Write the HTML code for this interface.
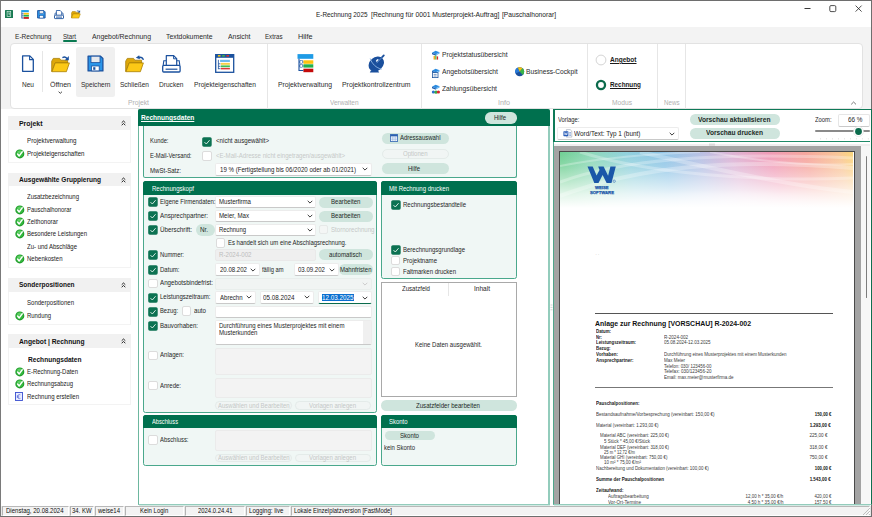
<!DOCTYPE html><html lang="de"><head><meta charset="utf-8"><title>E-Rechnung 2025</title><style>

html,body{margin:0;padding:0}
body{width:872px;height:517px;position:relative;overflow:hidden;background:#fff;font-family:"Liberation Sans",sans-serif;}
body div,body svg,body span{position:absolute;box-sizing:border-box}
span{white-space:pre;line-height:12px;height:12px}

</style></head><body>
<div style="left:0px;top:0px;width:872px;height:517px;background:#fff;border:1px solid #6e6e6e;border-left-color:#7a7a7a"></div>
<div style="left:1px;top:27px;width:870px;height:82px;background:#f3f3f3"></div>
<div style="left:10px;top:43px;width:853px;height:66px;background:#fff;border:1px solid #e2e2e2;border-radius:4px"></div>
<span style="left:316px;top:8.80px;font-size:7.5px;color:#1a1a1a;transform:scaleX(0.8517);transform-origin:0 50%;">E-Rechnung 2025</span>
<span style="left:371.2px;top:8.80px;font-size:7.5px;color:#1a1a1a;transform:scaleX(0.9024);transform-origin:0 50%;">[Rechnung für 0001 Musterprojekt-Auftrag]</span>
<span style="left:502px;top:8.80px;font-size:7.5px;color:#1a1a1a;transform:scaleX(0.8871);transform-origin:0 50%;">[Pauschalhonorar]</span>
<svg style="left:800px;top:2px" width="66" height="14" viewBox="0 0 66 14"><path d="M4.5 6.5h6" stroke="#222" stroke-width="0.9" fill="none"/><rect x="29.8" y="3.6" width="6" height="6" rx="1.2" stroke="#222" stroke-width="0.8" fill="none"/><path d="M55.6 3.6l6 6M61.6 3.6l-6 6" stroke="#222" stroke-width="0.8" fill="none"/></svg>
<svg style="left:5px;top:10px" width="9" height="9" viewBox="0 0 9 9"><rect x="0" y="0" width="8" height="8" rx="0.5" fill="#197a52"/><rect x="2.1" y="1.3" width="3.6" height="5.2" fill="none" stroke="#cfeadd" stroke-width="0.7"/><path d="M3.2 2.8h1.3v1.1h-1.3M4 3.9l0.8 1.5" stroke="#cfeadd" stroke-width="0.55" fill="none"/></svg>
<svg style="left:21px;top:9.6px" width="9" height="10" viewBox="0 0 9 10"><rect x="0.2" y="0.1" width="7.6" height="2.1" fill="#1e9be6"/><rect x="2.6" y="2.9" width="5.3" height="1.7" fill="#ffc20e"/><rect x="2.6" y="4.9" width="5.3" height="1.7" fill="#22b14c"/><rect x="2.6" y="7.1" width="5.3" height="1.7" fill="#c40a0a"/><path d="M0.8 2.2v6.2M0.8 3.8h1.8M0.8 5.8h1.8M0.8 8h1.8" stroke="#1b519e" stroke-width="0.8" fill="none"/></svg>
<svg style="left:37.2px;top:9.8px" width="9" height="9" viewBox="0 0 9 9"><path d="M0.6 0.6h6.2l1.3 1.3v6.1h-7.5z" fill="#2b95e8" stroke="#1b519e" stroke-width="0.9" stroke-linejoin="round"/><rect x="2.3" y="0.7" width="4.2" height="3" fill="#e6e9ee" stroke="#1b519e" stroke-width="0.5"/><rect x="2.6" y="5.6" width="3.6" height="2.4" fill="#fff" stroke="#1b519e" stroke-width="0.5"/></svg>
<svg style="left:53.5px;top:9.6px" width="10" height="10" viewBox="0 0 10 10"><path d="M2.4 5V0.5h3.8l1.5 1.5V5" fill="#fff" stroke="#1b519e" stroke-width="0.8" stroke-linejoin="round"/><path d="M2.4 3H1.2L0.8 5.2M7.7 3h1.2l0.4 2.2" fill="none" stroke="#1b519e" stroke-width="0.7"/><rect x="0.5" y="5.2" width="9" height="3.4" rx="0.6" fill="#fff" stroke="#1b519e" stroke-width="0.9"/><path d="M2 7.1h6" stroke="#1b519e" stroke-width="0.9"/></svg>
<svg style="left:70.8px;top:9.6px" width="10" height="9" viewBox="0 0 10 9"><path d="M0.5 8V2.9L1.3 1.5H4.4L5 2.4H8.3V4H2.2z" fill="#dda70a" stroke="#a87f08" stroke-width="0.5" stroke-linejoin="round"/><path d="M0.6 8.1L2.2 3.9H9.3L7.8 8.1z" fill="#fcc916" stroke="#a87f08" stroke-width="0.5" stroke-linejoin="round"/><path d="M5.8 1.2c1-0.6 2-0.3 2.5 0.7" stroke="#1b519e" stroke-width="0.8" fill="none"/><path d="M9.1 0.2v2.4h-2.3z" fill="#1b519e"/></svg>
<span style="left:14.5px;top:31.10px;font-size:7.5px;color:#2b2b2b;transform:scaleX(0.8752);transform-origin:0 50%;">E-Rechnung</span>
<span style="left:63px;top:31.10px;font-size:7.5px;color:#2b2b2b;transform:scaleX(0.8205);transform-origin:0 50%;">Start</span>
<span style="left:91.5px;top:31.10px;font-size:7.5px;color:#2b2b2b;transform:scaleX(0.9187);transform-origin:0 50%;">Angebot/Rechnung</span>
<span style="left:166px;top:31.10px;font-size:7.5px;color:#2b2b2b;transform:scaleX(0.9140);transform-origin:0 50%;">Textdokumente</span>
<span style="left:227.5px;top:31.10px;font-size:7.5px;color:#2b2b2b;transform:scaleX(0.9143);transform-origin:0 50%;">Ansicht</span>
<span style="left:265px;top:31.10px;font-size:7.5px;color:#2b2b2b;transform:scaleX(0.8229);transform-origin:0 50%;">Extras</span>
<span style="left:297.5px;top:31.10px;font-size:7.5px;color:#2b2b2b;transform:scaleX(0.9657);transform-origin:0 50%;">Hilfe</span>
<div style="left:62.8px;top:40.4px;width:14px;height:1.5px;background:#0a7a52;border-radius:1px"></div>
<div style="left:266.5px;top:44px;width:1px;height:64.5px;background:#e6e6e6"></div>
<div style="left:421.0px;top:44px;width:1px;height:64.5px;background:#e6e6e6"></div>
<div style="left:586.5px;top:44px;width:1px;height:64.5px;background:#e6e6e6"></div>
<div style="left:656.5px;top:44px;width:1px;height:64.5px;background:#e6e6e6"></div>
<div style="left:685.0px;top:44px;width:1px;height:64.5px;background:#e6e6e6"></div>
<div style="left:42px;top:51px;width:1px;height:41px;background:#e6e6e6"></div>
<div style="left:76px;top:47px;width:39px;height:50px;background:#f0f0f0;border-radius:2.5px"></div>
<span style="left:22px;top:79.20px;font-size:7.5px;color:#2b2b2b;transform:scaleX(0.8717);transform-origin:0 50%;">Neu</span>
<span style="left:50px;top:79.20px;font-size:7.5px;color:#2b2b2b;transform:scaleX(0.9379);transform-origin:0 50%;">Öffnen</span>
<span style="left:80.5px;top:79.20px;font-size:7.5px;color:#2b2b2b;transform:scaleX(0.8733);transform-origin:0 50%;">Speichern</span>
<span style="left:120px;top:79.20px;font-size:7.5px;color:#2b2b2b;transform:scaleX(0.8693);transform-origin:0 50%;">Schließen</span>
<span style="left:159px;top:79.20px;font-size:7.5px;color:#2b2b2b;transform:scaleX(0.8770);transform-origin:0 50%;">Drucken</span>
<span style="left:194px;top:79.20px;font-size:7.5px;color:#2b2b2b;transform:scaleX(0.8851);transform-origin:0 50%;">Projekteigenschaften</span>
<span style="left:278px;top:79.20px;font-size:7.5px;color:#2b2b2b;transform:scaleX(0.9057);transform-origin:0 50%;">Projektverwaltung</span>
<span style="left:342px;top:79.20px;font-size:7.5px;color:#2b2b2b;transform:scaleX(0.9179);transform-origin:0 50%;">Projektkontrollzentrum</span>
<svg style="left:57.7px;top:90.6px" width="5" height="4" viewBox="0 0 5 4"><path d="M0.6 0.7l1.7 1.6 1.7-1.6" stroke="#333" stroke-width="0.9" fill="none"/></svg>
<span style="left:128px;top:96.90px;font-size:7.5px;color:#b0b0b0;transform:scaleX(0.8996);transform-origin:0 50%;">Projekt</span>
<span style="left:329.5px;top:96.90px;font-size:7.5px;color:#b0b0b0;transform:scaleX(0.8653);transform-origin:0 50%;">Verwalten</span>
<span style="left:498px;top:96.90px;font-size:7.5px;color:#b0b0b0;transform:scaleX(0.9588);transform-origin:0 50%;">Info</span>
<span style="left:612px;top:96.90px;font-size:7.5px;color:#b0b0b0;transform:scaleX(0.8883);transform-origin:0 50%;">Modus</span>
<span style="left:663.5px;top:96.90px;font-size:7.5px;color:#b0b0b0;transform:scaleX(0.8260);transform-origin:0 50%;">News</span>
<svg style="left:850px;top:100px" width="8" height="6" viewBox="0 0 8 6"><path d="M1.2 4.4l2.4-2.4 2.4 2.4" stroke="#555" stroke-width="0.8" fill="none"/></svg>
<svg style="left:21px;top:55px" width="14" height="18" viewBox="0 0 14 18"><path d="M1.6 0.9h7.2l3.5 3.5v11.9h-10.7z" fill="#fff" stroke="#1b519e" stroke-width="1.3" stroke-linejoin="round"/><path d="M8.6 1v3.6h3.6" fill="none" stroke="#1b519e" stroke-width="1.1"/></svg>
<svg style="left:50.5px;top:54.5px" width="20" height="18" viewBox="0 0 20 18"><path d="M0.7 16.6V6.2L2.3 3.4H8.6L9.8 5.2H16.6V8H4.2z" fill="#dda70a" stroke="#a87f08" stroke-width="0.8" stroke-linejoin="round"/><path d="M1 16.7L4.2 7.9H18.4L15.4 16.7z" fill="#fcc916" stroke="#a87f08" stroke-width="0.8" stroke-linejoin="round"/><path d="M11.4 2.6c2-1 4-0.4 5 1.6" stroke="#1b519e" stroke-width="1.3" fill="none"/><path d="M17.8 1v4.2h-4z" fill="#1b519e"/></svg>
<svg style="left:124.5px;top:54.5px" width="20" height="18" viewBox="0 0 20 18"><path d="M0.7 16.6V6.2L2.3 3.4H8.6L9.8 5.2H16.6V8H4.2z" fill="#dda70a" stroke="#a87f08" stroke-width="0.8" stroke-linejoin="round"/><path d="M1 16.7L4.2 7.9H18.4L15.4 16.7z" fill="#fcc916" stroke="#a87f08" stroke-width="0.8" stroke-linejoin="round"/><path d="M18.4 4.9c-0.6-2-2.6-3-5-2.5" stroke="#1b519e" stroke-width="1.3" fill="none"/><path d="M10.8 2.8l3.4-2.6 0.7 4z" fill="#1b519e"/></svg>
<svg style="left:87px;top:55px" width="17" height="17" viewBox="0 0 17 17"><path d="M1.1 1.1h12.4l2.4 2.4v12.4h-14.8z" fill="#2b95e8" stroke="#1b519e" stroke-width="1.3" stroke-linejoin="round"/><rect x="4" y="1.2" width="9" height="6.4" fill="#e6e9ee" stroke="#1b519e" stroke-width="0.8"/><rect x="4.6" y="11" width="7.6" height="4.9" fill="#fff" stroke="#1b519e" stroke-width="0.8"/><rect x="6.2" y="12.2" width="2.2" height="2.6" fill="#1b519e"/></svg>
<svg style="left:162px;top:55px" width="19" height="18" viewBox="0 0 19 18"><path d="M4.3 10V0.7h7.4l3 3V10" fill="#fff" stroke="#1b519e" stroke-width="1.2" stroke-linejoin="round"/><path d="M11.6 0.8v3h3" fill="none" stroke="#1b519e" stroke-width="1"/><path d="M4.3 5.8H1.8L1.2 10.4M14.7 5.8h2.5l0.6 4.6" fill="none" stroke="#1b519e" stroke-width="1.1"/><rect x="0.7" y="10.4" width="17.4" height="6.6" rx="1" fill="#fff" stroke="#1b519e" stroke-width="1.3"/><path d="M3.6 14.2h11.8" stroke="#1b519e" stroke-width="1.2"/></svg>
<svg style="left:215px;top:54px" width="20" height="19" viewBox="0 0 20 19"><rect x="0.7" y="0.4" width="18" height="17.9" fill="#fff" stroke="#1b519e" stroke-width="1.3"/><rect x="0.7" y="0.4" width="18" height="3.4" fill="#1b519e"/><rect x="2.9" y="1" width="2.6" height="1.6" fill="#e8c018"/><rect x="7.2" y="1" width="2.6" height="1.6" fill="#3fae49"/><rect x="11.4" y="1" width="2.6" height="1.6" fill="#d03030"/><rect x="5.1" y="5.8" width="9.8" height="2.2" fill="#6db8f0"/><rect x="5.8" y="8.9" width="9.1" height="1.9" fill="#f6d04a"/><rect x="5.8" y="11.4" width="9.1" height="1.8" fill="#3fbf55"/><rect x="5.8" y="13.9" width="9.1" height="1.5" fill="#d83a3a"/><path d="M3.4 5.8v9.4M3.4 9.8h2M3.4 12.3h2M3.4 14.7h2" stroke="#1b519e" stroke-width="0.8" fill="none"/></svg>
<svg style="left:296.5px;top:54px" width="17" height="19" viewBox="0 0 17 19"><rect x="0.5" y="0.1" width="15.8" height="4.7" fill="#1e9be6"/><rect x="6.4" y="6.3" width="9.9" height="3.5" fill="#ffc20e"/><rect x="6.4" y="10.3" width="9.9" height="3.3" fill="#22b14c"/><rect x="6.4" y="14.7" width="9.9" height="3.5" fill="#c40a0a"/><path d="M2 4.8v12.2M2 8h4.4M2 12h4.4M2 16.5h4.4" stroke="#1b519e" stroke-width="1.1" fill="none"/><rect x="3" y="6.6" width="2.6" height="2.6" fill="#fff" stroke="#1b519e" stroke-width="0.5"/><rect x="3" y="10.6" width="2.6" height="2.6" fill="#fff" stroke="#1b519e" stroke-width="0.5"/></svg>
<svg style="left:367px;top:54px" width="19" height="19" viewBox="0 0 19 19"><path d="M4 16.2l-1.2 2.3h9.4l-1.6-2.6z" fill="#1a4f9c"/><ellipse cx="9.3" cy="10" rx="8.4" ry="6.7" fill="#1a4f9c" transform="rotate(-42 9.3 10)"/><path d="M3.2 4.4c1.6 5.4 6 9.6 11.6 10.8" stroke="#8db4e2" stroke-width="0.9" fill="none"/><path d="M9.4 9.4l7.4-8" stroke="#1a4f9c" stroke-width="1.8" stroke-linecap="round"/><path d="M9.6 9.2l5.6-6" stroke="#8db4e2" stroke-width="0.6"/><ellipse cx="10.2" cy="6.4" rx="1.6" ry="0.9" fill="#e8f0fa" transform="rotate(-42 10.2 6.4)"/></svg>
<svg style="left:430.5px;top:50px" width="10" height="10" viewBox="0 0 10 10"><path d="M1 2.8l3.6-2 4 1.4-3.7 2z" fill="#2a8be0"/><path d="M1 2.8v1.4l3.9 1.6v-1.6z" fill="#1e5fb0"/><path d="M4.9 4.2l3.7-2v1.4l-3.7 2z" fill="#63b2f2"/><rect x="2.6" y="6" width="1.3" height="3.6" fill="#f0a30a"/><rect x="4.2" y="5.4" width="1.3" height="4.2" fill="#57b947"/><rect x="5.8" y="6.4" width="1.3" height="3.2" fill="#d8262c"/></svg>
<svg style="left:430.5px;top:67.5px" width="10" height="10" viewBox="0 0 10 10"><path d="M1 2.8l3.6-2 4 1.4-3.7 2z" fill="#2a8be0"/><path d="M1 2.8v1.4l3.9 1.6v-1.6z" fill="#1e5fb0"/><path d="M4.9 4.2l3.7-2v1.4l-3.7 2z" fill="#63b2f2"/><rect x="1.4" y="4.6" width="5.6" height="5" fill="#fff" stroke="#1e57a0" stroke-width="0.8"/><path d="M2.6 6.4h3M2.6 8h3" stroke="#1e57a0" stroke-width="0.6"/></svg>
<svg style="left:430.5px;top:83.5px" width="10" height="10" viewBox="0 0 10 10"><path d="M1 2.8l3.6-2 4 1.4-3.7 2z" fill="#2a8be0"/><path d="M1 2.8v1.4l3.9 1.6v-1.6z" fill="#1e5fb0"/><path d="M4.9 4.2l3.7-2v1.4l-3.7 2z" fill="#63b2f2"/><circle cx="2.4" cy="8" r="1.6" fill="#2a6fd0"/><circle cx="5" cy="8.2" r="1.6" fill="#3aa845"/><circle cx="7.4" cy="8" r="1.6" fill="#d8262c"/></svg>
<span style="left:442px;top:48.90px;font-size:7.5px;color:#2b2b2b;transform:scaleX(0.8876);transform-origin:0 50%;">Projektstatusübersicht</span>
<span style="left:442px;top:66.40px;font-size:7.5px;color:#2b2b2b;transform:scaleX(0.9014);transform-origin:0 50%;">Angebotsübersicht</span>
<span style="left:442px;top:82.90px;font-size:7.5px;color:#2b2b2b;transform:scaleX(0.8973);transform-origin:0 50%;">Zahlungsübersicht</span>
<span style="left:526px;top:66.40px;font-size:7.5px;color:#2b2b2b;transform:scaleX(0.8886);transform-origin:0 50%;">Business-Cockpit</span>
<svg style="left:515.2px;top:67px" width="10" height="10" viewBox="0 0 10 10"><circle cx="4.7" cy="4.7" r="4.5" fill="#1a4f9c"/><path d="M4.7 4.7L0.47 6.24A4.5 4.5 0 0 1 2.80 0.62Z" fill="#2a7bd8"/><path d="M4.7 4.7L2.80 0.62A4.5 4.5 0 0 1 7.59 1.25Z" fill="#f2c20f"/><path d="M4.7 4.7L7.59 1.25A4.5 4.5 0 0 1 7.88 7.88Z" fill="#3ab54a"/></svg>
<svg style="left:595px;top:54px" width="12" height="12" viewBox="0 0 12 12"><circle cx="6" cy="6" r="4.9" fill="#fff" stroke="#c9c9c9" stroke-width="0.8"/></svg>
<svg style="left:595px;top:78.5px" width="12" height="12" viewBox="0 0 12 12"><circle cx="6" cy="6" r="4.05" fill="#fff" stroke="#0b6b4c" stroke-width="2.3"/></svg>
<span style="left:609.5px;top:53.90px;font-size:7.0px;color:#1a1a1a;font-weight:bold;text-decoration:underline;transform:scaleX(0.9334);transform-origin:0 50%;">Angebot</span>
<span style="left:609.5px;top:78.90px;font-size:7.0px;color:#1a1a1a;font-weight:bold;text-decoration:underline;transform:scaleX(0.9055);transform-origin:0 50%;">Rechnung</span>
<div style="left:7.5px;top:116px;width:123.5px;height:47px;background:#fff;border:1px solid #f3f3f3"></div>
<div style="left:7.5px;top:116px;width:123.5px;height:14px;background:#f1f1f1"></div>
<span style="left:18.5px;top:118.00px;font-size:7.0px;color:#111;font-weight:bold;transform:scaleX(0.9901);transform-origin:0 50%;">Projekt</span>
<svg style="left:121.4px;top:120.3px" width="5" height="6" viewBox="0 0 5 6"><path d="M0.7 2.7l1.8-1.7 1.8 1.7M0.7 5.2l1.8-1.7 1.8 1.7" stroke="#111" stroke-width="0.9" fill="none"/></svg>
<span style="left:27px;top:135.40px;font-size:6.8px;color:#222;transform:scaleX(0.9161);transform-origin:0 50%;">Projektverwaltung</span>
<span style="left:27px;top:147.90px;font-size:6.8px;color:#222;transform:scaleX(0.9057);transform-origin:0 50%;">Projekteigenschaften</span>
<svg style="left:14.6px;top:148.7px" width="10" height="10" viewBox="0 0 10 10"><circle cx="4.8" cy="4.9" r="4.5" fill="#1f9a2a"/><circle cx="4.8" cy="4.7" r="3.5" fill="#34b83e"/><ellipse cx="4.8" cy="2.9" rx="2.6" ry="1.5" fill="#6fd873" fill-opacity="0.7"/><path d="M2.6 5l1.6 1.9 3-4" stroke="#fff" stroke-width="1.5" fill="none" stroke-linecap="round" stroke-linejoin="round"/></svg>
<div style="left:7.5px;top:172.5px;width:123.5px;height:95.5px;background:#fff;border:1px solid #f3f3f3"></div>
<div style="left:7.5px;top:172.5px;width:123.5px;height:13.5px;background:#f1f1f1"></div>
<span style="left:18.5px;top:174.20px;font-size:7.0px;color:#111;font-weight:bold;transform:scaleX(0.9370);transform-origin:0 50%;">Ausgewählte Gruppierung</span>
<svg style="left:121.4px;top:176.5px" width="5" height="6" viewBox="0 0 5 6"><path d="M0.7 2.7l1.8-1.7 1.8 1.7M0.7 5.2l1.8-1.7 1.8 1.7" stroke="#111" stroke-width="0.9" fill="none"/></svg>
<span style="left:27px;top:191.40px;font-size:6.8px;color:#222;transform:scaleX(0.8821);transform-origin:0 50%;">Zusatzbezeichnung</span>
<span style="left:27px;top:203.90px;font-size:6.8px;color:#222;transform:scaleX(0.8659);transform-origin:0 50%;">Pauschalhonorar</span>
<svg style="left:14.6px;top:204.7px" width="10" height="10" viewBox="0 0 10 10"><circle cx="4.8" cy="4.9" r="4.5" fill="#1f9a2a"/><circle cx="4.8" cy="4.7" r="3.5" fill="#34b83e"/><ellipse cx="4.8" cy="2.9" rx="2.6" ry="1.5" fill="#6fd873" fill-opacity="0.7"/><path d="M2.6 5l1.6 1.9 3-4" stroke="#fff" stroke-width="1.5" fill="none" stroke-linecap="round" stroke-linejoin="round"/></svg>
<span style="left:27px;top:216.40px;font-size:6.8px;color:#222;transform:scaleX(0.8917);transform-origin:0 50%;">Zeithonorar</span>
<svg style="left:14.6px;top:217.2px" width="10" height="10" viewBox="0 0 10 10"><circle cx="4.8" cy="4.9" r="4.5" fill="#1f9a2a"/><circle cx="4.8" cy="4.7" r="3.5" fill="#34b83e"/><ellipse cx="4.8" cy="2.9" rx="2.6" ry="1.5" fill="#6fd873" fill-opacity="0.7"/><path d="M2.6 5l1.6 1.9 3-4" stroke="#fff" stroke-width="1.5" fill="none" stroke-linecap="round" stroke-linejoin="round"/></svg>
<span style="left:27px;top:228.40px;font-size:6.8px;color:#222;transform:scaleX(0.8819);transform-origin:0 50%;">Besondere Leistungen</span>
<svg style="left:14.6px;top:229.2px" width="10" height="10" viewBox="0 0 10 10"><circle cx="4.8" cy="4.9" r="4.5" fill="#1f9a2a"/><circle cx="4.8" cy="4.7" r="3.5" fill="#34b83e"/><ellipse cx="4.8" cy="2.9" rx="2.6" ry="1.5" fill="#6fd873" fill-opacity="0.7"/><path d="M2.6 5l1.6 1.9 3-4" stroke="#fff" stroke-width="1.5" fill="none" stroke-linecap="round" stroke-linejoin="round"/></svg>
<span style="left:27px;top:240.90px;font-size:6.8px;color:#222;transform:scaleX(0.8820);transform-origin:0 50%;">Zu- und Abschläge</span>
<span style="left:27px;top:253.40px;font-size:6.8px;color:#222;transform:scaleX(0.8861);transform-origin:0 50%;">Nebenkosten</span>
<svg style="left:14.6px;top:254.2px" width="10" height="10" viewBox="0 0 10 10"><circle cx="4.8" cy="4.9" r="4.5" fill="#1f9a2a"/><circle cx="4.8" cy="4.7" r="3.5" fill="#34b83e"/><ellipse cx="4.8" cy="2.9" rx="2.6" ry="1.5" fill="#6fd873" fill-opacity="0.7"/><path d="M2.6 5l1.6 1.9 3-4" stroke="#fff" stroke-width="1.5" fill="none" stroke-linecap="round" stroke-linejoin="round"/></svg>
<div style="left:7.5px;top:278px;width:123.5px;height:47px;background:#fff;border:1px solid #f3f3f3"></div>
<div style="left:7.5px;top:278px;width:123.5px;height:13.5px;background:#f1f1f1"></div>
<span style="left:18.5px;top:279.45px;font-size:7.0px;color:#111;font-weight:bold;transform:scaleX(0.9328);transform-origin:0 50%;">Sonderpositionen</span>
<svg style="left:121.4px;top:281.75px" width="5" height="6" viewBox="0 0 5 6"><path d="M0.7 2.7l1.8-1.7 1.8 1.7M0.7 5.2l1.8-1.7 1.8 1.7" stroke="#111" stroke-width="0.9" fill="none"/></svg>
<span style="left:27px;top:297.40px;font-size:6.8px;color:#222;transform:scaleX(0.8884);transform-origin:0 50%;">Sonderpositionen</span>
<span style="left:27px;top:309.90px;font-size:6.8px;color:#222;transform:scaleX(0.8698);transform-origin:0 50%;">Rundung</span>
<svg style="left:14.6px;top:310.7px" width="10" height="10" viewBox="0 0 10 10"><circle cx="4.8" cy="4.9" r="4.5" fill="#1f9a2a"/><circle cx="4.8" cy="4.7" r="3.5" fill="#34b83e"/><ellipse cx="4.8" cy="2.9" rx="2.6" ry="1.5" fill="#6fd873" fill-opacity="0.7"/><path d="M2.6 5l1.6 1.9 3-4" stroke="#fff" stroke-width="1.5" fill="none" stroke-linecap="round" stroke-linejoin="round"/></svg>
<div style="left:7.5px;top:334px;width:123.5px;height:71px;background:#fff;border:1px solid #f3f3f3"></div>
<div style="left:7.5px;top:334px;width:123.5px;height:13.5px;background:#f1f1f1"></div>
<span style="left:18.5px;top:335.70px;font-size:7.0px;color:#111;font-weight:bold;transform:scaleX(0.9569);transform-origin:0 50%;">Angebot | Rechnung</span>
<svg style="left:121.4px;top:338px" width="5" height="6" viewBox="0 0 5 6"><path d="M0.7 2.7l1.8-1.7 1.8 1.7M0.7 5.2l1.8-1.7 1.8 1.7" stroke="#111" stroke-width="0.9" fill="none"/></svg>
<span style="left:27px;top:365.90px;font-size:6.8px;color:#222;transform:scaleX(0.8765);transform-origin:0 50%;">E-Rechnung-Daten</span>
<svg style="left:14.6px;top:366.7px" width="10" height="10" viewBox="0 0 10 10"><circle cx="4.8" cy="4.9" r="4.5" fill="#1f9a2a"/><circle cx="4.8" cy="4.7" r="3.5" fill="#34b83e"/><ellipse cx="4.8" cy="2.9" rx="2.6" ry="1.5" fill="#6fd873" fill-opacity="0.7"/><path d="M2.6 5l1.6 1.9 3-4" stroke="#fff" stroke-width="1.5" fill="none" stroke-linecap="round" stroke-linejoin="round"/></svg>
<span style="left:27px;top:377.90px;font-size:6.8px;color:#222;transform:scaleX(0.8695);transform-origin:0 50%;">Rechnungsabzug</span>
<svg style="left:14.6px;top:378.7px" width="10" height="10" viewBox="0 0 10 10"><circle cx="4.8" cy="4.9" r="4.5" fill="#1f9a2a"/><circle cx="4.8" cy="4.7" r="3.5" fill="#34b83e"/><ellipse cx="4.8" cy="2.9" rx="2.6" ry="1.5" fill="#6fd873" fill-opacity="0.7"/><path d="M2.6 5l1.6 1.9 3-4" stroke="#fff" stroke-width="1.5" fill="none" stroke-linecap="round" stroke-linejoin="round"/></svg>
<span style="left:27px;top:391.10px;font-size:6.8px;color:#222;transform:scaleX(0.8877);transform-origin:0 50%;">Rechnung erstellen</span>
<svg style="left:15px;top:391.5px" width="8" height="9" viewBox="0 0 8 9"><rect x="0.5" y="0.5" width="7" height="8" fill="#e8ecff" stroke="#3a4fd0" stroke-width="0.9"/><path d="M5.4 2.8c-1.6-0.8-2.8 0.2-2.8 1.8s1.2 2.6 2.8 1.8M1.8 4h2.4M1.8 5.2h2.4" stroke="#3a4fd0" stroke-width="0.6" fill="none"/></svg>
<span style="left:27.5px;top:354.10px;font-size:6.8px;color:#111;font-weight:bold;transform:scaleX(0.9702);transform-origin:0 50%;">Rechnungsdaten</span>
<div style="left:138px;top:109px;width:412px;height:396px;background:#fff;border-left:1px solid #6db79f;border-right:2px solid #93ccbc;border-bottom:1px solid #93ccbc;border-radius:2px 2px 0 0"></div>
<div style="left:139px;top:505px;width:411px;height:1px;background:#d3eae3"></div>
<div style="left:138px;top:109px;width:412px;height:17px;background:#00704e;border-radius:2px 2px 0 0"></div>
<span style="left:141.2px;top:112.40px;font-size:6.8px;color:#fff;font-weight:bold;text-decoration:underline;transform:scaleX(0.9666);transform-origin:0 50%;">Rechnungsdaten</span>
<div style="left:485px;top:112px;width:32px;height:11.5px;background:#cfe5dd;border-radius:5.75px"></div>
<span style="left:494px;top:112.15px;font-size:6.8px;color:#1c2a26;transform:scaleX(0.8817);transform-origin:0 50%;">Hilfe</span>
<div style="left:143px;top:126px;width:374px;height:51.5px;background:#f0f7f5;border:1px solid #4aa88c;border-top:none;border-radius:0 0 2.5px 2.5px"></div>
<span style="left:149.5px;top:135.40px;font-size:6.8px;color:#1f1f1f;transform:scaleX(0.8586);transform-origin:0 50%;">Kunde:</span>
<svg style="left:202px;top:136.5px" width="10" height="10" viewBox="0 0 10 10"><rect x="0.2" y="0.2" width="9.5" height="9.5" rx="1.6" fill="#0c7252"/><path d="M2.5 5.1l1.8 1.9 3.3-3.8" stroke="#e8f4ef" stroke-width="0.9" fill="none"/></svg>
<span style="left:216px;top:135.40px;font-size:6.8px;color:#1f1f1f;transform:scaleX(0.9048);transform-origin:0 50%;">&lt;nicht ausgewählt&gt;</span>
<span style="left:149.5px;top:150.40px;font-size:6.8px;color:#1f1f1f;transform:scaleX(0.8582);transform-origin:0 50%;">E-Mail-Versand:</span>
<div style="left:202px;top:151px;width:9.8px;height:9.8px;background:#fff;border:1px solid #dcdcdc;border-radius:2px"></div>
<span style="left:216px;top:150.40px;font-size:6.8px;color:#c6c9c8;transform:scaleX(0.8914);transform-origin:0 50%;">&lt;E-Mail-Adresse nicht eingetragen/ausgewählt&gt;</span>
<span style="left:149.5px;top:164.90px;font-size:6.8px;color:#1f1f1f;transform:scaleX(0.8921);transform-origin:0 50%;">MwSt-Satz:</span>
<div style="left:215.4px;top:163px;width:156.6px;height:12.5px;background:#fff;border:1px solid #ececec;border-bottom:1px solid #c9c9c9;border-radius:2px"></div>
<span style="left:220px;top:163.65px;font-size:6.8px;color:#1c1c1c;transform:scaleX(0.8997);transform-origin:0 50%;">19 % (Fertigstellung bis 06/2020 oder ab 01/2021)</span>
<svg style="left:362px;top:167.25px" width="6" height="4.4" viewBox="0 0 6 4.4"><path d="M0.7 0.8l2.3 2.3 2.3-2.3" stroke="#333" stroke-width="0.95" fill="none"/></svg>
<div style="left:381.5px;top:132.5px;width:67.5px;height:11px;background:#cfe5dd;border-radius:5.5px"></div>
<span style="left:400px;top:132.40px;font-size:6.8px;color:#1c2a26;transform:scaleX(0.8786);transform-origin:0 50%;">Adressauswahl</span>
<svg style="left:390px;top:134px" width="8" height="8" viewBox="0 0 8 8"><rect x="0.4" y="0.6" width="7.2" height="6.8" fill="#fff" stroke="#2a5fb0" stroke-width="0.8"/><rect x="0.4" y="0.6" width="7.2" height="1.8" fill="#2a5fb0"/><path d="M2.8 2.4v5M5.2 2.4v5M0.4 4h7.2M0.4 5.7h7.2" stroke="#7aa0d8" stroke-width="0.5"/></svg>
<div style="left:381.5px;top:148.5px;width:67.5px;height:10.5px;background:#f1f5f4;border:1px solid #e4ebe9;border-radius:5.25px"></div>
<span style="left:402.5px;top:148.15px;font-size:6.8px;color:#c4c8c7;transform:scaleX(0.8879);transform-origin:0 50%;">Optionen</span>
<div style="left:381.5px;top:163px;width:67.5px;height:11px;background:#cfe5dd;border-radius:5.5px"></div>
<span style="left:408px;top:162.90px;font-size:6.8px;color:#1c2a26;transform:scaleX(0.8817);transform-origin:0 50%;">Hilfe</span>
<div style="left:143px;top:181px;width:234px;height:232px;background:#f0f7f5;border:1px solid #4aa88c;border-radius:2.5px"></div>
<div style="left:143px;top:181px;width:234px;height:14px;background:#00704e;border-radius:2.5px 2.5px 0 0"></div>
<span style="left:151.5px;top:182.80px;font-size:6.8px;color:#fff;transform:scaleX(0.8892);transform-origin:0 50%;">Rechnungskopf</span>
<svg style="left:148px;top:197px" width="10" height="10" viewBox="0 0 10 10"><rect x="0.2" y="0.2" width="9.5" height="9.5" rx="1.6" fill="#0c7252"/><path d="M2.5 5.1l1.8 1.9 3.3-3.8" stroke="#e8f4ef" stroke-width="0.9" fill="none"/></svg>
<span style="left:160px;top:196.40px;font-size:6.8px;color:#1f1f1f;transform:scaleX(0.8794);transform-origin:0 50%;z-index:3;">Eigene Firmendaten:</span>
<div style="left:215.4px;top:196px;width:101.1px;height:12px;background:#fff;border:1px solid #ececec;border-bottom:1px solid #c9c9c9;border-radius:2px"></div>
<span style="left:219px;top:196.40px;font-size:6.8px;color:#1c1c1c;transform:scaleX(0.8916);transform-origin:0 50%;">Musterfirma</span>
<svg style="left:306.5px;top:200.0px" width="6" height="4.4" viewBox="0 0 6 4.4"><path d="M0.7 0.8l2.3 2.3 2.3-2.3" stroke="#333" stroke-width="0.95" fill="none"/></svg>
<div style="left:319px;top:196.5px;width:54px;height:11px;background:#cfe5dd;border-radius:5.5px"></div>
<span style="left:330.5px;top:196.40px;font-size:6.8px;color:#1c2a26;transform:scaleX(0.8969);transform-origin:0 50%;">Bearbeiten</span>
<svg style="left:148px;top:211px" width="10" height="10" viewBox="0 0 10 10"><rect x="0.2" y="0.2" width="9.5" height="9.5" rx="1.6" fill="#0c7252"/><path d="M2.5 5.1l1.8 1.9 3.3-3.8" stroke="#e8f4ef" stroke-width="0.9" fill="none"/></svg>
<span style="left:160px;top:210.40px;font-size:6.8px;color:#1f1f1f;transform:scaleX(0.9206);transform-origin:0 50%;">Ansprechpartner:</span>
<div style="left:215.4px;top:210px;width:101.1px;height:12px;background:#fff;border:1px solid #ececec;border-bottom:1px solid #c9c9c9;border-radius:2px"></div>
<span style="left:219px;top:210.40px;font-size:6.8px;color:#1c1c1c;transform:scaleX(0.9023);transform-origin:0 50%;">Meier, Max</span>
<svg style="left:306.5px;top:214.0px" width="6" height="4.4" viewBox="0 0 6 4.4"><path d="M0.7 0.8l2.3 2.3 2.3-2.3" stroke="#333" stroke-width="0.95" fill="none"/></svg>
<div style="left:319px;top:210.5px;width:54px;height:11px;background:#cfe5dd;border-radius:5.5px"></div>
<span style="left:330.5px;top:210.40px;font-size:6.8px;color:#1c2a26;transform:scaleX(0.8969);transform-origin:0 50%;">Bearbeiten</span>
<svg style="left:148px;top:225px" width="10" height="10" viewBox="0 0 10 10"><rect x="0.2" y="0.2" width="9.5" height="9.5" rx="1.6" fill="#0c7252"/><path d="M2.5 5.1l1.8 1.9 3.3-3.8" stroke="#e8f4ef" stroke-width="0.9" fill="none"/></svg>
<span style="left:160px;top:224.40px;font-size:6.8px;color:#1f1f1f;transform:scaleX(0.9209);transform-origin:0 50%;">Überschrift:</span>
<div style="left:195.5px;top:223.5px;width:19px;height:12.5px;background:#cfe5dd;border-radius:6.25px"></div>
<span style="left:200px;top:224.15px;font-size:6.8px;color:#1c2a26;transform:scaleX(0.9209);transform-origin:0 50%;">Nr.</span>
<div style="left:215.4px;top:224px;width:101.1px;height:12px;background:#fff;border:1px solid #ececec;border-bottom:1px solid #c9c9c9;border-radius:2px"></div>
<span style="left:219px;top:224.40px;font-size:6.8px;color:#1c1c1c;transform:scaleX(0.8710);transform-origin:0 50%;">Rechnung</span>
<svg style="left:306.5px;top:228.0px" width="6" height="4.4" viewBox="0 0 6 4.4"><path d="M0.7 0.8l2.3 2.3 2.3-2.3" stroke="#333" stroke-width="0.95" fill="none"/></svg>
<div style="left:319px;top:225px;width:9.2px;height:9.2px;background:#f4f6f5;border:1px solid #e6e9e8;border-radius:2px"></div>
<span style="left:330.5px;top:224.40px;font-size:6.8px;color:#c6c9c8;transform:scaleX(0.8992);transform-origin:0 50%;">Stornorechnung</span>
<div style="left:215.5px;top:238px;width:9.8px;height:9.8px;background:#fff;border:1px solid #dcdcdc;border-radius:2px"></div>
<span style="left:227.5px;top:237.40px;font-size:6.8px;color:#1f1f1f;transform:scaleX(0.8760);transform-origin:0 50%;">Es handelt sich um eine Abschlagsrechnung.</span>
<svg style="left:148px;top:250px" width="10" height="10" viewBox="0 0 10 10"><rect x="0.2" y="0.2" width="9.5" height="9.5" rx="1.6" fill="#0c7252"/><path d="M2.5 5.1l1.8 1.9 3.3-3.8" stroke="#e8f4ef" stroke-width="0.9" fill="none"/></svg>
<span style="left:160px;top:249.40px;font-size:6.8px;color:#1f1f1f;transform:scaleX(0.8586);transform-origin:0 50%;">Nummer:</span>
<div style="left:215.4px;top:249px;width:101.1px;height:12px;background:#efefef;border:1px solid #e9e9e9;border-radius:2px"></div>
<span style="left:219px;top:249.40px;font-size:6.8px;color:#bdbdbd;transform:scaleX(0.9051);transform-origin:0 50%;">R-2024-002</span>
<div style="left:319px;top:248.5px;width:54px;height:11.5px;background:#cfe5dd;border-radius:5.75px"></div>
<span style="left:329px;top:248.65px;font-size:6.8px;color:#1c2a26;transform:scaleX(0.9003);transform-origin:0 50%;">automatisch</span>
<svg style="left:148px;top:265px" width="10" height="10" viewBox="0 0 10 10"><rect x="0.2" y="0.2" width="9.5" height="9.5" rx="1.6" fill="#0c7252"/><path d="M2.5 5.1l1.8 1.9 3.3-3.8" stroke="#e8f4ef" stroke-width="0.9" fill="none"/></svg>
<span style="left:160px;top:263.90px;font-size:6.8px;color:#1f1f1f;transform:scaleX(0.8895);transform-origin:0 50%;">Datum:</span>
<div style="left:215.4px;top:263px;width:44.6px;height:13px;background:#fff;border:1px solid #ececec;border-bottom:1px solid #c9c9c9;border-radius:2px"></div>
<span style="left:219.5px;top:263.90px;font-size:6.8px;color:#1c1c1c;transform:scaleX(0.8926);transform-origin:0 50%;">20.08.202</span>
<svg style="left:250px;top:267.5px" width="6" height="4.4" viewBox="0 0 6 4.4"><path d="M0.7 0.8l2.3 2.3 2.3-2.3" stroke="#333" stroke-width="0.95" fill="none"/></svg>
<span style="left:262px;top:263.90px;font-size:6.8px;color:#1f1f1f;transform:scaleX(0.8494);transform-origin:0 50%;">fällig am</span>
<div style="left:294px;top:263px;width:44.5px;height:13px;background:#fff;border:1px solid #ececec;border-bottom:1px solid #c9c9c9;border-radius:2px"></div>
<span style="left:298px;top:263.90px;font-size:6.8px;color:#1c1c1c;transform:scaleX(0.8926);transform-origin:0 50%;">03.09.202</span>
<svg style="left:328.5px;top:267.5px" width="6" height="4.4" viewBox="0 0 6 4.4"><path d="M0.7 0.8l2.3 2.3 2.3-2.3" stroke="#333" stroke-width="0.95" fill="none"/></svg>
<div style="left:338.5px;top:263.5px;width:34.5px;height:11.5px;background:#cfe5dd;border-radius:5.75px"></div>
<span style="left:339.5px;top:263.65px;font-size:6.8px;color:#1c2a26;transform:scaleX(0.8869);transform-origin:0 50%;">Mahnfristen</span>
<div style="left:148px;top:278.5px;width:9.8px;height:9.8px;background:#fff;border:1px solid #dcdcdc;border-radius:2px"></div>
<span style="left:160px;top:277.40px;font-size:6.8px;color:#1f1f1f;transform:scaleX(0.9106);transform-origin:0 50%;">Angebotsbindefrist:</span>
<div style="left:215.4px;top:278px;width:156.6px;height:11.5px;background:#f1f4f3;border:1px solid #e9eeec;border-radius:2px"></div>
<svg style="left:362px;top:281.5px" width="6" height="4.4" viewBox="0 0 6 4.4"><path d="M0.7 0.8l2.3 2.3 2.3-2.3" stroke="#c9c9c9" stroke-width="0.95" fill="none"/></svg>
<svg style="left:148px;top:292.5px" width="10" height="10" viewBox="0 0 10 10"><rect x="0.2" y="0.2" width="9.5" height="9.5" rx="1.6" fill="#0c7252"/><path d="M2.5 5.1l1.8 1.9 3.3-3.8" stroke="#e8f4ef" stroke-width="0.9" fill="none"/></svg>
<span style="left:160px;top:291.40px;font-size:6.8px;color:#1f1f1f;transform:scaleX(0.8852);transform-origin:0 50%;">Leistungszeitraum:</span>
<div style="left:215.4px;top:291px;width:40.6px;height:12.5px;background:#fff;border:1px solid #ececec;border-bottom:1px solid #c9c9c9;border-radius:2px"></div>
<span style="left:219.5px;top:291.65px;font-size:6.8px;color:#1c1c1c;transform:scaleX(0.8883);transform-origin:0 50%;">Abrechn</span>
<svg style="left:246px;top:295.25px" width="6" height="4.4" viewBox="0 0 6 4.4"><path d="M0.7 0.8l2.3 2.3 2.3-2.3" stroke="#333" stroke-width="0.95" fill="none"/></svg>
<div style="left:259.5px;top:291px;width:54px;height:12.5px;background:#fff;border:1px solid #ececec;border-bottom:1px solid #c9c9c9;border-radius:2px"></div>
<span style="left:263px;top:291.65px;font-size:6.8px;color:#1c1c1c;transform:scaleX(0.9256);transform-origin:0 50%;">05.08.2024</span>
<svg style="left:303.5px;top:295.25px" width="6" height="4.4" viewBox="0 0 6 4.4"><path d="M0.7 0.8l2.3 2.3 2.3-2.3" stroke="#333" stroke-width="0.95" fill="none"/></svg>
<div style="left:317.5px;top:291px;width:54.5px;height:13px;background:#fff;border:1px solid #ececec;border-bottom:1px solid #0b6b4c;border-radius:2px"></div>
<svg style="left:362px;top:295.5px" width="6" height="4.4" viewBox="0 0 6 4.4"><path d="M0.7 0.8l2.3 2.3 2.3-2.3" stroke="#333" stroke-width="0.95" fill="none"/></svg>
<div style="left:322px;top:293.5px;width:32px;height:7.6px;background:#0a6fd0"></div>
<span style="left:322.3px;top:291.60px;font-size:6.8px;color:#fff;transform:scaleX(0.9256);transform-origin:0 50%;">12.03.2025</span>
<svg style="left:148px;top:306.5px" width="10" height="10" viewBox="0 0 10 10"><rect x="0.2" y="0.2" width="9.5" height="9.5" rx="1.6" fill="#0c7252"/><path d="M2.5 5.1l1.8 1.9 3.3-3.8" stroke="#e8f4ef" stroke-width="0.9" fill="none"/></svg>
<span style="left:160px;top:305.40px;font-size:6.8px;color:#1f1f1f;transform:scaleX(0.8502);transform-origin:0 50%;">Bezug:</span>
<div style="left:181.5px;top:306px;width:9.8px;height:9.8px;background:#fff;border:1px solid #dcdcdc;border-radius:2px"></div>
<span style="left:194px;top:305.40px;font-size:6.8px;color:#1f1f1f;transform:scaleX(0.9067);transform-origin:0 50%;">auto</span>
<div style="left:215.4px;top:306px;width:156.6px;height:12px;background:#fff;border:1px solid #ececec;border-bottom:1px solid #c9c9c9;border-radius:2px"></div>
<svg style="left:148px;top:320.5px" width="10" height="10" viewBox="0 0 10 10"><rect x="0.2" y="0.2" width="9.5" height="9.5" rx="1.6" fill="#0c7252"/><path d="M2.5 5.1l1.8 1.9 3.3-3.8" stroke="#e8f4ef" stroke-width="0.9" fill="none"/></svg>
<span style="left:160px;top:319.90px;font-size:6.8px;color:#1f1f1f;transform:scaleX(0.8977);transform-origin:0 50%;">Bauvorhaben:</span>
<div style="left:215.4px;top:320px;width:156.6px;height:25px;background:#fff;border:1px solid #ececec;border-bottom:1px solid #c9c9c9;border-radius:2px"></div>
<div style="left:362.5px;top:321px;width:8.5px;height:22.5px;background:#f0f0f0"></div>
<span style="left:219px;top:319.90px;font-size:6.8px;color:#1f1f1f;transform:scaleX(0.8906);transform-origin:0 50%;">Durchführung eines Musterprojektes mit einem</span>
<span style="left:219px;top:326.90px;font-size:6.8px;color:#1f1f1f;transform:scaleX(0.8937);transform-origin:0 50%;">Musterkunden</span>
<div style="left:148px;top:350.5px;width:9.8px;height:9.8px;background:#fff;border:1px solid #dcdcdc;border-radius:2px"></div>
<span style="left:160px;top:349.40px;font-size:6.8px;color:#1f1f1f;transform:scaleX(0.8941);transform-origin:0 50%;">Anlagen:</span>
<div style="left:215.4px;top:348px;width:156.6px;height:27px;background:#f3f3f3;border:1px solid #ebebeb;border-radius:2px"></div>
<div style="left:148px;top:380.5px;width:9.8px;height:9.8px;background:#fff;border:1px solid #dcdcdc;border-radius:2px"></div>
<span style="left:160px;top:379.70px;font-size:6.8px;color:#1f1f1f;transform:scaleX(0.8819);transform-origin:0 50%;">Anrede:</span>
<div style="left:215.4px;top:378px;width:156.6px;height:20px;background:#f3f3f3;border:1px solid #ebebeb;border-radius:2px"></div>
<div style="left:215.4px;top:401px;width:77px;height:8.6px;background:#f1f5f4;border:1px solid #e4ebe9;border-radius:4.3px"></div>
<span style="left:217.9px;top:399.70px;font-size:6.8px;color:#c4c8c7;transform:scaleX(0.8812);transform-origin:0 50%;">Auswählen und Bearbeiten</span>
<div style="left:295px;top:401px;width:76.4px;height:8.6px;background:#f1f5f4;border:1px solid #e4ebe9;border-radius:4.3px"></div>
<span style="left:309px;top:399.70px;font-size:6.8px;color:#c4c8c7;transform:scaleX(0.8881);transform-origin:0 50%;">Vorlagen anlegen</span>
<div style="left:381px;top:181px;width:136px;height:97.5px;background:#f0f7f5;border:1px solid #4aa88c;border-radius:2.5px"></div>
<div style="left:381px;top:181px;width:136px;height:14px;background:#00704e;border-radius:2.5px 2.5px 0 0"></div>
<span style="left:389px;top:182.80px;font-size:6.8px;color:#fff;transform:scaleX(0.8822);transform-origin:0 50%;">Mit Rechnung drucken</span>
<svg style="left:390.5px;top:199.5px" width="10" height="10" viewBox="0 0 10 10"><rect x="0.2" y="0.2" width="9.5" height="9.5" rx="1.6" fill="#0c7252"/><path d="M2.5 5.1l1.8 1.9 3.3-3.8" stroke="#e8f4ef" stroke-width="0.9" fill="none"/></svg>
<span style="left:402.5px;top:198.90px;font-size:6.8px;color:#1f1f1f;transform:scaleX(0.8867);transform-origin:0 50%;">Rechnungsbestandteile</span>
<svg style="left:390.5px;top:244.5px" width="10" height="10" viewBox="0 0 10 10"><rect x="0.2" y="0.2" width="9.5" height="9.5" rx="1.6" fill="#0c7252"/><path d="M2.5 5.1l1.8 1.9 3.3-3.8" stroke="#e8f4ef" stroke-width="0.9" fill="none"/></svg>
<span style="left:402.5px;top:243.90px;font-size:6.8px;color:#1f1f1f;transform:scaleX(0.8820);transform-origin:0 50%;">Berechnungsgrundlage</span>
<div style="left:390.5px;top:256px;width:9.4px;height:9.4px;background:#fff;border:1px solid #dcdcdc;border-radius:2px"></div>
<span style="left:402.5px;top:255.40px;font-size:6.8px;color:#1f1f1f;transform:scaleX(0.8911);transform-origin:0 50%;">Projektname</span>
<div style="left:390.5px;top:267px;width:9.4px;height:9.4px;background:#fff;border:1px solid #dcdcdc;border-radius:2px"></div>
<span style="left:402.5px;top:266.40px;font-size:6.8px;color:#1f1f1f;transform:scaleX(0.8822);transform-origin:0 50%;">Faltmarken drucken</span>
<div style="left:381px;top:282px;width:136px;height:115px;background:#fff;border:1px solid #a9a9a9"></div>
<div style="left:448px;top:283px;width:1px;height:12.5px;background:#e6e6e6"></div>
<span style="left:401.5px;top:282.90px;font-size:6.8px;color:#1f1f1f;transform:scaleX(0.8929);transform-origin:0 50%;">Zusatzfeld</span>
<span style="left:474px;top:282.90px;font-size:6.8px;color:#1f1f1f;transform:scaleX(0.9615);transform-origin:0 50%;">Inhalt</span>
<span style="left:414.5px;top:339.40px;font-size:6.8px;color:#1f1f1f;transform:scaleX(0.8865);transform-origin:0 50%;">Keine Daten ausgewählt.</span>
<div style="left:381px;top:400px;width:136px;height:10.6px;background:#cfe5dd;border-radius:5.3px"></div>
<span style="left:416px;top:399.70px;font-size:6.8px;color:#1c2a26;transform:scaleX(0.8961);transform-origin:0 50%;">Zusatzfelder bearbeiten</span>
<div style="left:143px;top:414.7px;width:234px;height:51.6px;background:#f0f7f5;border:1px solid #4aa88c;border-radius:2.5px"></div>
<div style="left:143px;top:414.7px;width:234px;height:13px;background:#00704e;border-radius:2.5px 2.5px 0 0"></div>
<span style="left:152px;top:416.00px;font-size:6.8px;color:#fff;transform:scaleX(0.8391);transform-origin:0 50%;">Abschluss</span>
<div style="left:148px;top:435px;width:9.8px;height:9.8px;background:#fff;border:1px solid #dcdcdc;border-radius:2px"></div>
<span style="left:160px;top:433.90px;font-size:6.8px;color:#1f1f1f;transform:scaleX(0.8669);transform-origin:0 50%;">Abschluss:</span>
<div style="left:215.4px;top:430px;width:156.6px;height:21px;background:#f3f3f3;border:1px solid #ebebeb;border-radius:2px"></div>
<div style="left:215.4px;top:453.7px;width:77px;height:8.6px;background:#f1f5f4;border:1px solid #e4ebe9;border-radius:4.3px"></div>
<span style="left:217.9px;top:452.40px;font-size:6.8px;color:#c4c8c7;transform:scaleX(0.8812);transform-origin:0 50%;">Auswählen und Bearbeiten</span>
<div style="left:295px;top:453.7px;width:76.4px;height:8.6px;background:#f1f5f4;border:1px solid #e4ebe9;border-radius:4.3px"></div>
<span style="left:309px;top:452.40px;font-size:6.8px;color:#c4c8c7;transform:scaleX(0.8881);transform-origin:0 50%;">Vorlagen anlegen</span>
<div style="left:381px;top:414.7px;width:136px;height:51.6px;background:#f0f7f5;border:1px solid #4aa88c;border-radius:2.5px"></div>
<div style="left:381px;top:414.7px;width:136px;height:13px;background:#00704e;border-radius:2.5px 2.5px 0 0"></div>
<span style="left:389px;top:416.00px;font-size:6.8px;color:#fff;transform:scaleX(0.8738);transform-origin:0 50%;">Skonto</span>
<div style="left:384.5px;top:430.7px;width:50.2px;height:9.6px;background:#cfe5dd;border-radius:4.8px"></div>
<span style="left:399.5px;top:429.90px;font-size:6.8px;color:#1c2a26;transform:scaleX(0.8974);transform-origin:0 50%;">Skonto</span>
<span style="left:384px;top:442.20px;font-size:6.8px;color:#1f1f1f;transform:scaleX(0.8725);transform-origin:0 50%;">kein Skonto</span>
<svg style="left:550px;top:304px" width="3" height="7" viewBox="0 0 3 7"><path d="M0.5 1h2M0.5 3.4h2M0.5 5.8h2" stroke="#b5b5b5" stroke-width="0.6"/></svg>
<div style="left:553px;top:109px;width:319px;height:396px;background:#fff;border:1px solid #4fa58b;border-top:1.6px solid #0f7a58;border-right:1.6px solid #0f6f50;border-bottom:1px solid #93ccbc"></div>
<span style="left:557.5px;top:113.90px;font-size:6.8px;color:#1f1f1f;transform:scaleX(0.8616);transform-origin:0 50%;">Vorlage:</span>
<div style="left:557px;top:127px;width:122px;height:13px;background:#fff;border:1px solid #ececec;border-bottom:1px solid #c9c9c9;border-radius:2px"></div>
<span style="left:574px;top:127.90px;font-size:6.8px;color:#1c1c1c;transform:scaleX(0.9445);transform-origin:0 50%;">Word/Text: Typ 1 (bunt)</span>
<svg style="left:668.5px;top:131.5px" width="6" height="4.4" viewBox="0 0 6 4.4"><path d="M0.7 0.8l2.3 2.3 2.3-2.3" stroke="#333" stroke-width="0.95" fill="none"/></svg>
<svg style="left:562.5px;top:129px" width="10" height="9" viewBox="0 0 10 9"><path d="M3.4 0.6h3.8l1.6 1.6v5.9h-5.4z" fill="#fff" stroke="#9aa5b5" stroke-width="0.6"/><rect x="0.4" y="2.2" width="5" height="5" rx="0.6" fill="#2a5db8"/><path d="M1.4 3.4l0.7 2.6 0.8-2.2 0.8 2.2 0.7-2.6" stroke="#fff" stroke-width="0.6" fill="none"/><path d="M6.2 3.6h1.8M6.2 5h1.8M6.2 6.4h1.8" stroke="#2a5db8" stroke-width="0.5"/></svg>
<div style="left:689.5px;top:114px;width:90px;height:10.5px;background:#cfe5dd;border-radius:5.25px"></div>
<span style="left:698px;top:113.65px;font-size:6.8px;color:#1c2a26;font-weight:bold;transform:scaleX(0.9808);transform-origin:0 50%;">Vorschau aktualisieren</span>
<div style="left:689.5px;top:127.5px;width:90px;height:11px;background:#cfe5dd;border-radius:5.5px"></div>
<span style="left:705.5px;top:127.40px;font-size:6.8px;color:#1c2a26;font-weight:bold;transform:scaleX(0.9692);transform-origin:0 50%;">Vorschau drucken</span>
<span style="left:814.5px;top:114.40px;font-size:6.8px;color:#1f1f1f;transform:scaleX(0.8564);transform-origin:0 50%;">Zoom:</span>
<div style="left:837.5px;top:114px;width:32px;height:13px;background:#fff;border:1px solid #e6e6e6;border-bottom-color:#c9c9c9;border-radius:2px"></div>
<span style="left:847.5px;top:114.40px;font-size:6.8px;color:#1f1f1f;transform:scaleX(0.9355);transform-origin:0 50%;">66 %</span>
<div style="left:814.5px;top:130.4px;width:55px;height:1.2px;background:#8a8a8a;border-radius:1px"></div>
<svg style="left:852.5px;top:126px" width="11" height="11" viewBox="0 0 11 11"><circle cx="5.5" cy="5.5" r="5" fill="#fff" stroke="#d8d8d8" stroke-width="0.5"/><circle cx="5.5" cy="5.5" r="3.4" fill="#0b6b4c"/></svg>
<svg style="left:814px;top:137.6px" width="56" height="2" viewBox="0 0 56 2"><rect x="6.30" y="0.4" width="0.7" height="0.9" fill="#c8c8c8"/><rect x="12.25" y="0.4" width="0.7" height="0.9" fill="#c8c8c8"/><rect x="18.20" y="0.4" width="0.7" height="0.9" fill="#c8c8c8"/><rect x="24.15" y="0.4" width="0.7" height="0.9" fill="#c8c8c8"/><rect x="30.10" y="0.4" width="0.7" height="0.9" fill="#c8c8c8"/><rect x="36.05" y="0.4" width="0.7" height="0.9" fill="#c8c8c8"/><rect x="42.00" y="0.4" width="0.7" height="0.9" fill="#c8c8c8"/><rect x="47.95" y="0.4" width="0.7" height="0.9" fill="#c8c8c8"/><rect x="53.90" y="0.4" width="0.7" height="0.9" fill="#c8c8c8"/></svg>
<div style="left:554px;top:141px;width:316px;height:1px;background:#1f8a68"></div>
<div style="left:553px;top:109px;width:2px;height:33px;background:#0f7a58"></div>
<div style="left:554px;top:144px;width:316px;height:2px;background:#efefef"></div>
<svg style="left:709px;top:143px" width="7" height="3" viewBox="0 0 7 3"><path d="M1 0.4v2.4M3 0.4v2.4M5 0.4v2.4" stroke="#aaa" stroke-width="0.6"/></svg>
<div style="left:554px;top:146px;width:307px;height:358px;background:#a3a3a3"></div>
<div style="left:861px;top:146px;width:9px;height:358px;background:#f7f7f7"></div>
<div style="left:865.5px;top:155.5px;width:1.3px;height:142px;background:#7d7d7d;border-radius:1px"></div>
<div style="left:559px;top:151px;width:295.5px;height:353.5px;background:#fff;border:1px solid #4a4a4a;border-bottom:none;overflow:hidden"><svg style="left:0;top:0" width="293" height="56" viewBox="0 0 293 56"><defs><linearGradient id="hg" gradientUnits="userSpaceOnUse" x1="0" y1="0" x2="280" y2="-72"><stop offset="0" stop-color="#6fcf93"/><stop offset="0.10" stop-color="#8cd8b8"/><stop offset="0.22" stop-color="#8fd0dc"/><stop offset="0.34" stop-color="#8cc4e6"/><stop offset="0.46" stop-color="#b4c0e4"/><stop offset="0.57" stop-color="#dcb4d6"/><stop offset="0.70" stop-color="#f09ab6"/><stop offset="0.82" stop-color="#f6a59c"/><stop offset="0.93" stop-color="#f9c596"/><stop offset="1" stop-color="#fbdc70"/></linearGradient><linearGradient id="vg" x1="0" x2="0" y1="0" y2="1"><stop offset="0" stop-color="#fff" stop-opacity="0"/><stop offset="0.25" stop-color="#fff" stop-opacity="0.2"/><stop offset="0.5" stop-color="#fff" stop-opacity="0.5"/><stop offset="0.75" stop-color="#fff" stop-opacity="0.8"/><stop offset="1" stop-color="#fff" stop-opacity="1"/></linearGradient><radialGradient id="rg" cx="0.5" cy="1" r="0.75"><stop offset="0" stop-color="#fff" stop-opacity="1"/><stop offset="0.55" stop-color="#fff" stop-opacity="0.75"/><stop offset="1" stop-color="#fff" stop-opacity="0"/></radialGradient></defs><rect width="293" height="56" fill="url(#hg)"/><g fill="none" stroke="#fff" stroke-opacity="0.28"><path d="M0 30C60 8 150 0 293 6" stroke-width="3"/><path d="M0 44C80 14 170 6 293 16" stroke-width="4"/><path d="M20 0C90 22 200 30 293 26" stroke-width="3"/><path d="M80 0C150 16 230 34 293 40" stroke-width="4"/><path d="M0 14C40 6 90 2 140 0" stroke-width="2"/><path d="M150 0C200 10 250 14 293 12" stroke-width="2"/></g><ellipse cx="165" cy="58" rx="150" ry="40" fill="url(#rg)"/><rect width="293" height="56" fill="url(#vg)"/></svg></div>
<svg style="left:587px;top:165.5px" width="30" height="18" viewBox="0 0 30 18"><path d="M0.5 0.6H5.7L9.6 9.4L12.5 4L11.2 0.6H16.6L21.1 9.8L23.4 0.6H28.8L24.5 17H19.6L15.6 9L11.5 17H7.3Z" fill="#1a57a8"/><circle cx="27.2" cy="15.2" r="1.2" fill="none" stroke="#1a57a8" stroke-width="0.5"/></svg>
<span style="left:595px;top:181.60px;font-size:4.2px;color:#1a57a8;font-weight:bold;transform:scaleX(1.0074);transform-origin:0 50%;-webkit-text-stroke:0.25px #1a57a8;">WEISE</span>
<span style="left:589.7px;top:186.70px;font-size:4.2px;color:#1a57a8;font-weight:bold;transform:scaleX(1.0112);transform-origin:0 50%;-webkit-text-stroke:0.25px #1a57a8;">SOFTWARE</span>
<span style="left:595.6px;top:248.00px;font-size:4.4px;color:#777;">. .</span>
<div style="left:594.5px;top:312.6px;width:238.5px;height:0.9px;background:#555"></div>
<span style="left:594.5px;top:317.90px;font-size:7.4px;color:#111;font-weight:bold;transform:scaleX(0.9379);transform-origin:0 50%;">Anlage zur Rechnung [VORSCHAU] R-2024-002</span>
<span style="left:596px;top:324.90px;font-size:5.0px;color:#222;font-weight:bold;transform:scaleX(0.8704);transform-origin:0 50%;">Datum:</span>
<span style="left:596px;top:330.60px;font-size:5.0px;color:#222;font-weight:bold;transform:scaleX(0.8294);transform-origin:0 50%;">Nr:</span>
<span style="left:663.5px;top:330.60px;font-size:5.0px;color:#3a3a3a;transform:scaleX(0.9089);transform-origin:0 50%;">R-2024-002</span>
<span style="left:596px;top:336.40px;font-size:5.0px;color:#222;font-weight:bold;transform:scaleX(0.8725);transform-origin:0 50%;">Leistungszeitraum:</span>
<span style="left:663.5px;top:336.40px;font-size:5.0px;color:#3a3a3a;transform:scaleX(0.8991);transform-origin:0 50%;">05.08.2024-12.03.2025</span>
<span style="left:596px;top:342.40px;font-size:5.0px;color:#222;font-weight:bold;transform:scaleX(0.8697);transform-origin:0 50%;">Bezug:</span>
<span style="left:596px;top:348.40px;font-size:5.0px;color:#222;font-weight:bold;transform:scaleX(0.9031);transform-origin:0 50%;">Vorhaben:</span>
<span style="left:663.5px;top:348.40px;font-size:5.0px;color:#3a3a3a;transform:scaleX(0.8959);transform-origin:0 50%;">Durchführung eines Musterprojektes mit einem Musterkunden</span>
<span style="left:596px;top:354.00px;font-size:5.0px;color:#222;font-weight:bold;transform:scaleX(0.8939);transform-origin:0 50%;">Ansprechpartner:</span>
<span style="left:663.5px;top:354.00px;font-size:5.0px;color:#3a3a3a;transform:scaleX(0.8996);transform-origin:0 50%;">Max Meier</span>
<span style="left:663.5px;top:359.60px;font-size:5.0px;color:#3a3a3a;transform:scaleX(0.8806);transform-origin:0 50%;">Telefon: 030/ 123456-00</span>
<span style="left:663.5px;top:365.30px;font-size:5.0px;color:#3a3a3a;transform:scaleX(0.9088);transform-origin:0 50%;">Telefax: 030/123456-20</span>
<span style="left:663.5px;top:370.90px;font-size:5.0px;color:#3a3a3a;transform:scaleX(0.9020);transform-origin:0 50%;">Email: max.meier@musterfirma.de</span>
<div style="left:594.5px;top:387px;width:238.5px;height:1.1px;background:#777"></div>
<span style="left:595.6px;top:397.00px;font-size:5.0px;color:#222;font-weight:bold;transform:scaleX(0.8895);transform-origin:0 50%;">Pauschalpositionen:</span>
<span style="left:595.6px;top:407.80px;font-size:5.0px;color:#3a3a3a;transform:scaleX(0.9117);transform-origin:0 50%;">Bestandsaufnahme/Vorbesprechung (vereinbart: 150,00 €)</span>
<span style="right:41px;top:407.80px;font-size:5.0px;color:#111;font-weight:bold;transform:scaleX(0.8526);transform-origin:100% 50%;">150,00 €</span>
<span style="left:595.6px;top:418.60px;font-size:5.0px;color:#3a3a3a;transform:scaleX(0.8769);transform-origin:0 50%;">Material (vereinbart: 1.293,00 €)</span>
<span style="right:41px;top:418.60px;font-size:5.0px;color:#111;font-weight:bold;transform:scaleX(0.8883);transform-origin:100% 50%;">1.293,00 €</span>
<span style="left:600.4px;top:429.20px;font-size:5.0px;color:#3a3a3a;transform:scaleX(0.8804);transform-origin:0 50%;">Material ABC (vereinbart: 225,00 €)</span>
<span style="right:44.5px;top:429.20px;font-size:5.0px;color:#3a3a3a;transform:scaleX(0.9246);transform-origin:100% 50%;">225,00 €</span>
<span style="left:604.4px;top:434.70px;font-size:5.0px;color:#3a3a3a;transform:scaleX(0.8849);transform-origin:0 50%;">5 Stück * 45,00 €/Stück</span>
<span style="left:600.4px;top:440.70px;font-size:5.0px;color:#3a3a3a;transform:scaleX(0.8804);transform-origin:0 50%;">Material DEF (vereinbart: 318,00 €)</span>
<span style="right:44.5px;top:440.70px;font-size:5.0px;color:#3a3a3a;transform:scaleX(0.9246);transform-origin:100% 50%;">318,00 €</span>
<span style="left:604.4px;top:445.80px;font-size:5.0px;color:#3a3a3a;transform:scaleX(0.8141);transform-origin:0 50%;">25 m * 12,72 €/m</span>
<span style="left:600.4px;top:451.30px;font-size:5.0px;color:#3a3a3a;transform:scaleX(0.8723);transform-origin:0 50%;">Material GHI (vereinbart: 750,00 €)</span>
<span style="right:44.5px;top:451.30px;font-size:5.0px;color:#3a3a3a;transform:scaleX(0.9246);transform-origin:100% 50%;">750,00 €</span>
<span style="left:604.4px;top:456.40px;font-size:5.0px;color:#3a3a3a;transform:scaleX(0.8936);transform-origin:0 50%;">10 m² * 75,00 €/m²</span>
<span style="left:595.6px;top:462.40px;font-size:5.0px;color:#3a3a3a;transform:scaleX(0.8911);transform-origin:0 50%;">Nachbereitung und Dokumentation (vereinbart: 100,00 €)</span>
<span style="right:41px;top:462.40px;font-size:5.0px;color:#111;font-weight:bold;transform:scaleX(0.8526);transform-origin:100% 50%;">100,00 €</span>
<span style="left:595.6px;top:473.20px;font-size:5.0px;color:#222;font-weight:bold;transform:scaleX(0.8964);transform-origin:0 50%;">Summe der Pauschalpositionen</span>
<span style="right:41px;top:473.20px;font-size:5.0px;color:#111;font-weight:bold;transform:scaleX(0.8883);transform-origin:100% 50%;">1.543,00 €</span>
<span style="left:595.6px;top:484.40px;font-size:5.0px;color:#222;font-weight:bold;transform:scaleX(0.8883);transform-origin:0 50%;">Zeitaufwand:</span>
<span style="left:608.3px;top:490.40px;font-size:5.0px;color:#3a3a3a;transform:scaleX(0.9035);transform-origin:0 50%;">Auftragsbearbeitung</span>
<span style="right:88.29999999999995px;top:490.40px;font-size:5.0px;color:#3a3a3a;transform:scaleX(0.8920);transform-origin:100% 50%;">12,00 h * 35,00 €/h</span>
<span style="right:41px;top:490.40px;font-size:5.0px;color:#3a3a3a;transform:scaleX(0.8732);transform-origin:100% 50%;">420,00 €</span>
<span style="left:608.3px;top:496.10px;font-size:5.0px;color:#3a3a3a;transform:scaleX(0.9279);transform-origin:0 50%;">Vor-Ort-Termine</span>
<span style="right:88.29999999999995px;top:496.10px;font-size:5.0px;color:#3a3a3a;transform:scaleX(0.9042);transform-origin:100% 50%;">4,50 h * 35,00 €/h</span>
<span style="right:41px;top:496.10px;font-size:5.0px;color:#3a3a3a;transform:scaleX(0.8732);transform-origin:100% 50%;">157,50 €</span>
<div style="left:554px;top:504px;width:316.4px;height:1px;background:#93ccbc"></div>
<div style="left:554px;top:505px;width:316.4px;height:1px;background:#d3eae3"></div>
<div style="left:1px;top:506px;width:870px;height:10px;background:#e9e9e9"></div>
<div style="left:2px;top:506px;width:67px;height:9.6px;background:#f3f3f3;border:1px solid #fff;border-top-color:#b8b8b8;border-left-color:#b4b4b4"></div>
<div style="left:70px;top:506px;width:23.5px;height:9.6px;background:#f3f3f3;border:1px solid #fff;border-top-color:#b8b8b8;border-left-color:#b4b4b4"></div>
<div style="left:95px;top:506px;width:29px;height:9.6px;background:#f3f3f3;border:1px solid #fff;border-top-color:#b8b8b8;border-left-color:#b4b4b4"></div>
<div style="left:125px;top:506px;width:59px;height:9.6px;background:#f3f3f3;border:1px solid #fff;border-top-color:#b8b8b8;border-left-color:#b4b4b4"></div>
<div style="left:185px;top:506px;width:60px;height:9.6px;background:#f3f3f3;border:1px solid #fff;border-top-color:#b8b8b8;border-left-color:#b4b4b4"></div>
<div style="left:246px;top:506px;width:44px;height:9.6px;background:#f3f3f3;border:1px solid #fff;border-top-color:#b8b8b8;border-left-color:#b4b4b4"></div>
<div style="left:291px;top:506px;width:579px;height:9.6px;background:#f3f3f3;border:1px solid #fff;border-top-color:#b8b8b8;border-left-color:#b4b4b4"></div>
<span style="left:6px;top:504.80px;font-size:7.1px;color:#111;transform:scaleX(0.8524);transform-origin:0 50%;">Dienstag, 20.08.2024</span>
<span style="left:72.4px;top:504.80px;font-size:7.1px;color:#111;transform:scaleX(0.8381);transform-origin:0 50%;">34. KW</span>
<span style="left:98px;top:504.80px;font-size:7.1px;color:#111;transform:scaleX(0.8451);transform-origin:0 50%;">weise14</span>
<span style="left:139.8px;top:504.80px;font-size:7.1px;color:#111;transform:scaleX(0.8410);transform-origin:0 50%;">Kein Login</span>
<span style="left:197.6px;top:504.80px;font-size:7.1px;color:#111;transform:scaleX(0.8329);transform-origin:0 50%;">2024.0.24.41</span>
<span style="left:249px;top:504.80px;font-size:7.1px;color:#111;transform:scaleX(0.8634);transform-origin:0 50%;">Logging: live</span>
<span style="left:294px;top:504.80px;font-size:7.1px;color:#111;transform:scaleX(0.8339);transform-origin:0 50%;">Lokale Einzelplatzversion [FastMode]</span>
<svg style="left:862px;top:507px" width="9" height="9" viewBox="0 0 9 9"><path d="M8 1L1 8M8 4L4 8M8 7L7 8" stroke="#b0b0b0" stroke-width="0.8"/></svg>
</body></html>
